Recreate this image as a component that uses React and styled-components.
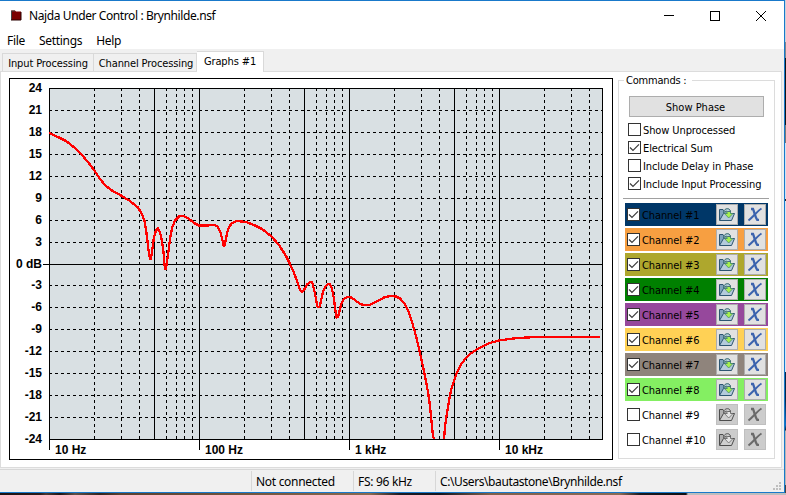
import { useState } from 'react';
import styled, { createGlobalStyle, css } from 'styled-components'

const GlobalStyle = createGlobalStyle`
  body {
    margin: 0;
    overflow: hidden;
    background: #fff;
  }
  * {
    box-sizing: border-box;
  }
`

const Desktop = styled.div`
  width: 786px;
  height: 495px;
  display: grid;
  grid-template-columns: 785px 1px;
  grid-template-rows: 493px 2px;
`;

const Window = styled.div`
  display: flex;
  flex-direction: column;
  background: #f0f0f0;
  border: 1px solid #1979ca;
  border-left: none;
  font-family: 'Noto Sans', 'Open Sans', sans-serif;
  font-size: 12px;
  color: #000;
  white-space: nowrap;
`;

const RightEdge = styled.div`
  background: linear-gradient(
    #c9d3dc 0 42px, #7e868e 42px 58px, #101418 58px 125px, #777 125px 143px,
    #cfe3f5 143px 199px, #222 199px 201px, #d5e6f5 201px 372px,
    #06264a 372px 400px, #0a6fc8 425px, #15202b 430px, #b5b5b5 431px 485px, #444 485px
  );
`;

const BottomEdge = styled.div`
  grid-column: 1 / 3;
  background: linear-gradient(
    90deg,
    #1c1112 0, #2a1a1a 40px, #4a3833 46px, #1f1516 60px, #5f5048 75px, #33241f 100px,
    #5a4030 120px, #75573f 260px, #8a6a50 370px, #1b1a22 400px, #14161f 440px,
    #80604a 490px, #8a6b55 620px, #1a1a20 640px, #0d1014 686px, #bdbdbd 688px 100%
  );
`;

const TitleBar = styled.div`
  display: flex;
  align-items: center;
  height: 29px;
  padding-left: 10px;
  background: #fff;
`;

const Title = styled.span`
  flex: 1;
  padding-left: 7px;
  letter-spacing: -0.4px;
`;

const WinButton = styled.div`
  width: 46px;
  height: 29px;
  display: flex;
  align-items: center;
  justify-content: center;
`;

const MenuBar = styled.div`
  display: flex;
  align-items: center;
  gap: 14px;
  height: 19px;
  padding: 3px 0 0 7px;
  background: #fff;
`;

const MenuItem = styled.span`
  line-height: 16px;
  letter-spacing: -0.3px;
`;

const TabBar = styled.div`
  display: flex;
  align-items: flex-end;
  height: 22px;
  padding: 0 0 0 2px;
  font: 11px 'DejaVu Sans Condensed', 'DejaVu Sans', sans-serif;
`;

const Tab = styled.div`
  display: flex;
  align-items: center;
  justify-content: center;
  width: ${({ $width }) => $width}px;
  height: 18px;
  padding: 2px 0 0 ${({ $indent }) => $indent || 0}px;
  border: 1px solid #d9d9d9;
  border-bottom: none;
  background: #f0f0f0;
  letter-spacing: -0.12px;
  ${({ $active }) => $active ? css`
    height: 21px;
    margin-bottom: -1px;
    padding: 0 0 1px;
    background: #fff;
    z-index: 1;
  ` : css`
    & + & {
      border-left: none;
    }
  `}
`;

const Page = styled.div`
  display: flex;
  align-items: flex-start;
  gap: 5px;
  width: 782px;
  height: 397px;
  padding: 6px 0 0 8px;
  background: #fff;
  border: 1px solid #dcdcdc;
`;

const ChartSvg = styled.svg`
  display: block;
  flex: none;
  background: #fff;
  font: bold 12px 'Liberation Sans', Arial, sans-serif;
`;

const Group = styled.fieldset`
  width: 157px;
  height: 385px;
  margin: -4px 0 0;
  padding: 9px 5px 0 4px;
  border: 1px solid #dcdcdc;
  font: 11px 'DejaVu Sans Condensed', 'DejaVu Sans', sans-serif;
`;

const Legend = styled.legend`
  margin-left: 1px;
  padding: 0 5px 0 2px;
  height: 13px;
  line-height: 13px;
  letter-spacing: -0.2px;
`;

const PhaseButton = styled.button`
  display: block;
  width: 135px;
  height: 21px;
  margin-left: 6px;
  padding: 1px 2px 0 0;
  border: 1px solid #adadad;
  background: #e1e1e1;
  font: inherit;
  color: #000;
`;

const Options = styled.div`
  display: flex;
  flex-direction: column;
  gap: 5px;
  padding: 6px 0 8px 5px;
`;

const Check = styled.label`
  display: flex;
  align-items: center;
  gap: 2px;
  height: 13px;
  letter-spacing: -0.1px;
`;

const CheckText = styled.span`
  padding-top: 1px;
`;

const Box = styled.span`
  display: flex;
  flex: none;
  width: 13px;
  height: 13px;
  border: 1px solid #333;
  background: #fff;
`;

const Separator = styled.div`
  width: 146px;
  height: 1px;
  background: #a0a0a0;
`;

const Channels = styled.div`
  display: flex;
  flex-direction: column;
  gap: 2px;
  padding: 4px 0 0 2px;
`;

const ChannelRow = styled.div`
  display: flex;
  align-items: center;
  justify-content: space-between;
  width: 143px;
  height: 23px;
  padding: 0 2px;
  background: ${({ $color }) => $color};
`;

const RowButtons = styled.div`
  display: flex;
  gap: 6px;
`;

const IconButton = styled.button`
  display: flex;
  align-items: center;
  justify-content: center;
  width: 22px;
  height: 21px;
  padding: 0;
  border: 1px solid ${({ disabled }) => disabled ? '#bfbfbf' : '#adadad'};
  background: ${({ disabled }) => disabled ? '#cccccc' : '#e1e1e1'};
`;

const StatusBar = styled.div`
  display: flex;
  height: 23px;
  margin-top: 1px;
  border-top: 1px solid #d7d7d7;
`;

const StatusCell = styled.div`
  width: ${({ $width }) => $width}px;
  height: 20px;
  margin-top: 1px;
  padding: 2px 0 0 4px;
  line-height: 17px;
  letter-spacing: ${({ $tracking }) => $tracking || '-0.3px'};
  border-left: ${({ $first }) => $first ? 'none' : '1px solid #d7d7d7'};
`;

const Grip = styled.svg`
  align-self: flex-end;
  margin: 0 2px 1px auto;
`;

const CHANNELS = [
  { name: 'Channel #1', color: '#003768', on: true },
  { name: 'Channel #2', color: '#f79f41', on: true },
  { name: 'Channel #3', color: '#aea72d', on: true },
  { name: 'Channel #4', color: '#008000', on: true },
  { name: 'Channel #5', color: '#96489c', on: true },
  { name: 'Channel #6', color: '#ffd155', on: true },
  { name: 'Channel #7', color: '#8f847c', on: true },
  { name: 'Channel #8', color: '#84ef62', on: true },
  { name: 'Channel #9', color: 'transparent', on: false },
  { name: 'Channel #10', color: 'transparent', on: false },
]

// Plot area inside the chart svg
const LEFT = 40, RIGHT = 593, TOP = 10, BOTTOM = 361, DECADE = 150

// Response trace, in chart pixels: x,y
const TRACE = [
  40,55, 49,59, 57,63, 66,70, 72,76, 79,84, 85,92, 91,101, 97,108, 103,112.5, 112,117.5,
  121,123, 129,129.5, 133,136, 135.5,143, 137.5,155, 139.5,172, 141,181, 142,181, 143.5,170,
  145,159, 147,152.5, 149,150.5, 151,154, 153,163, 154.5,174, 155.5,187, 156.3,191, 157,191,
  158,184, 159.5,173, 161,161, 163,150, 166,142.5, 170,138.5, 174,138, 179,140, 185,145, 190,147.5,
  198,147.5, 205,147, 208,148, 211,153, 213,160, 214.5,167.5, 215.5,167.5, 217,161, 218,155, 220,149,
  223,145, 228,143, 237,144, 245,147, 253,151, 262,158, 270,167, 277,178, 281,186, 285,195,
  288,203, 291,212, 293,214, 295,212, 298,206.5, 301,204, 303,204, 305,211, 307,221, 308.5,229,
  310.5,229, 312,223, 314,214, 316,209, 319,206, 321,206, 323,211, 325,221, 326,230, 327.5,239.5,
  329,239, 331,231, 333,224, 335.5,220.5, 339,219, 342,219.5, 346,222, 351,226, 355,227, 360,227,
  367,224, 375,219.5, 381,218, 387,218.5, 391,220.5, 395,225, 399,232, 403,244, 407,258,
  411,275, 415,293, 419,314, 421,328, 422.5,343, 424,358, 425,361,
]
const TRACE_END = [
  435,361, 436,349, 438,335, 440,323, 442,312, 444,306, 447,297, 451,288, 456,281, 461,276,
  467,272, 474,268, 481,265, 490,262.5, 498,261.3, 509,260, 527,259, 560,258.8, 591,258.8,
]

const gridX = () => {
  const lines = []
  for (let d = 0; d < 4; d++) {
    for (let k = 1; k < 10; k++) {
      const x = Math.round(LEFT + DECADE * (d + Math.log10(k)))
      if (x > LEFT && x < RIGHT) lines.push({ x, solid: k === 1 || k === 5 })
    }
  }
  return lines
}

const Chart = () => (
  <ChartSvg width="604" height="382" viewBox="0 0 604 382">
    <rect x="0.5" y="0.5" width="603" height="381" fill="none" stroke="#000" />
    <rect x="40.5" y="10.5" width="553" height="351" fill="#d9e0e3" stroke="#000" />
    <g stroke="#000">
      {gridX().map(({ x, solid }) => (
        <line key={x} x1={x + 0.5} x2={x + 0.5} y1={TOP} y2={BOTTOM} strokeDasharray={solid ? 'none' : '3 3'} />
      ))}
      {Array.from({ length: 15 }, (_, i) => {
        const n = i + 1
        const y = Math.round(TOP + n * 21.9375) + 0.5
        const zero = n === 8
        return <line key={n} x1={zero ? 34 : LEFT} x2={RIGHT} y1={y} y2={y} strokeDasharray={zero ? 'none' : '3 3'} />
      })}
      {[0, 1, 2, 3].map(d => (
        <line key={d} x1={LEFT + d * DECADE + 0.5} x2={LEFT + d * DECADE + 0.5} y1={BOTTOM} y2="372" />
      ))}
    </g>
    <g fill="none" stroke="#ff0000" strokeWidth="2.3" strokeLinejoin="round" shapeRendering="crispEdges">
      <polyline points={TRACE.join(' ')} />
      <polyline points={TRACE_END.join(' ')} />
    </g>
    {Array.from({ length: 17 }, (_, i) => (
      <text key={i} x="33" y={Math.round(TOP + i * 21.9375) + 4} textAnchor="end">
        {i === 8 ? '0 dB' : 24 - i * 3}
      </text>
    ))}
    {['10 Hz', '100 Hz', '1 kHz', '10 kHz'].map((label, i) => (
      <text key={label} x={LEFT + 6 + i * DECADE} y="376">{label}</text>
    ))}
  </ChartSvg>
)

const FolderIcon = ({ off }) => {
  const line = off ? '#4c4c4c' : '#2c5571'
  return (
    <svg width="18" height="15" viewBox="0 0 18 15">
      <path d="M1.5 13V2.5H5L6 4H12.5V8" fill={off ? '#b0b0b0' : '#7fa3bd'} stroke={line} />
      <path d="M1.5 13.5L5.5 6.5H16.5L13.5 13.5Z" fill={off ? '#cfcfcf' : '#b3cadb'} stroke={line} />
      <path d="M5.5 5.5C6 1 12 0.5 12.5 4.5V6.5H15L10.7 11L6.5 6.5H9.3C9.3 4.5 7.5 4 5.5 5.5Z"
        fill={off ? '#e4e4e4' : '#a5f04f'} stroke={off ? '#6b6b6b' : '#4a8a70'} strokeWidth="0.8" />
      <path d="M5.5 5.5C6 1 12 0.5 12.5 4.5H9.2C8.7 4 7.5 4 5.5 5.5Z"
        fill={off ? '#d0d0d0' : '#b9d3dc'} stroke={line} strokeWidth="0.8" />
    </svg>
  )
}

const CrossIcon = ({ off }) => (
  <svg width="16" height="15" viewBox="0 0 16 15" fill="none" stroke={off ? '#6a6a6a' : '#3c63ae'}>
    <path d="M4 2H6C7.2 4.5 8.2 10 10.2 12.8H12" strokeWidth="2.3" />
    <path d="M14.5 1.5C10.5 4 6.5 9.5 1.5 13.5" strokeWidth="2" />
  </svg>
)

const CheckBox = ({ label, initial }) => {
  const [checked, setChecked] = useState(initial)
  return (
    <Check onClick={() => setChecked(!checked)}>
      <Box>
        {checked && (
          <svg width="11" height="11" viewBox="0 0 11 11">
            <path d="M1 5.5L4 8.5L10 2.3" fill="none" stroke="#3c3c3c" strokeWidth="1.2" />
          </svg>
        )}
      </Box>
      <CheckText>{label}</CheckText>
    </Check>
  )
}

const App = () => {
  return (
    <>
      <GlobalStyle />
      <Desktop>
        <Window>
          <TitleBar>
            <svg width="12" height="11" viewBox="0 0 12 11">
              <path d="M1 0.5H5L6 1.5H11V10H1Z" fill="#7b0000" />
              <path d="M1.5 10V1H5" fill="none" stroke="#444" />
              <path d="M1 10H11V2" fill="none" stroke="#2b0000" />
            </svg>
            <Title>Najda Under Control : Brynhilde.nsf</Title>
            <WinButton>
              <svg width="10" height="11"><path d="M0 5.5H10" stroke="#000" /></svg>
            </WinButton>
            <WinButton>
              <svg width="10" height="10"><rect x="0.5" y="0.5" width="9" height="9" fill="none" stroke="#000" /></svg>
            </WinButton>
            <WinButton>
              <svg width="10" height="10"><path d="M0 0L10 10M10 0L0 10" stroke="#000" /></svg>
            </WinButton>
          </TitleBar>
          <MenuBar>
            <MenuItem>File</MenuItem>
            <MenuItem>Settings</MenuItem>
            <MenuItem>Help</MenuItem>
          </MenuBar>
          <TabBar>
            <Tab $width={92}>Input Processing</Tab>
            <Tab $width={103} $indent={2}>Channel Processing</Tab>
            <Tab $width={67} $active>Graphs #1</Tab>
          </TabBar>
          <Page>
            <Chart />
            <Group>
              <Legend>Commands :</Legend>
              <PhaseButton>Show Phase</PhaseButton>
              <Options>
                <CheckBox label="Show Unprocessed" initial={false} />
                <CheckBox label="Electrical Sum" initial={true} />
                <CheckBox label="Include Delay in Phase" initial={false} />
                <CheckBox label="Include Input Processing" initial={true} />
              </Options>
              <Separator />
              <Channels>
                {CHANNELS.map(({ name, color, on }) => (
                  <ChannelRow key={name} $color={color}>
                    <CheckBox label={name} initial={on} />
                    <RowButtons>
                      <IconButton disabled={!on}><FolderIcon off={!on} /></IconButton>
                      <IconButton disabled={!on}><CrossIcon off={!on} /></IconButton>
                    </RowButtons>
                  </ChannelRow>
                ))}
              </Channels>
            </Group>
          </Page>
          <StatusBar>
            <StatusCell $width={251} $first />
            <StatusCell $width={102}>Not connected</StatusCell>
            <StatusCell $width={82}>FS: 96 kHz</StatusCell>
            <StatusCell $width={300} $tracking="-0.4px">C:\Users\bautastone\Brynhilde.nsf</StatusCell>
            <Grip width="9" height="9" fill="#bfbfbf">
              <path d="M6 0h2v2h-2zM3 3h2v2h-2zM6 3h2v2h-2zM0 6h2v2h-2zM3 6h2v2h-2zM6 6h2v2h-2z" />
            </Grip>
          </StatusBar>
        </Window>
        <RightEdge />
        <BottomEdge />
      </Desktop>
    </>
  )
}

export default App
